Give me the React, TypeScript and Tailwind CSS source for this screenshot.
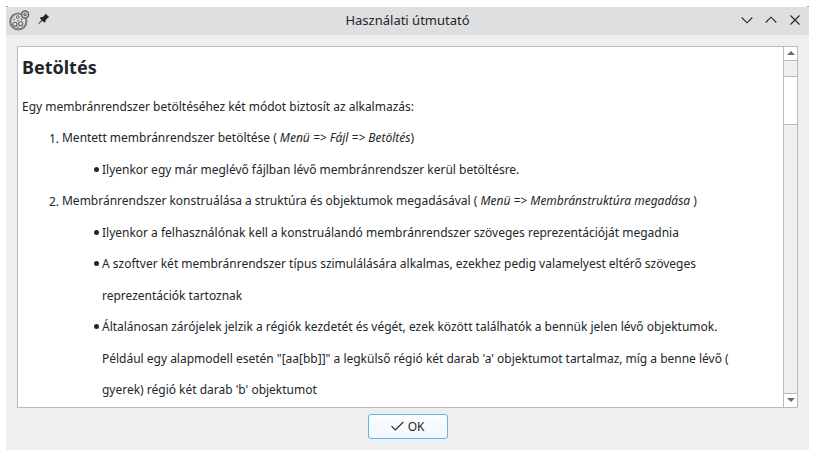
import React from "react";

function MembraneIcon() {
  return (
    <svg width="21" height="21" viewBox="0 0 22 22" fill="none" stroke="#606264">
      <circle cx="9.8" cy="12" r="8.5" strokeWidth="2" fill="#dcddde" />
      <circle cx="9.8" cy="12" r="8.5" strokeWidth="0.6" stroke="#a5a7a9" />
      <circle cx="16.8" cy="4.8" r="3.7" strokeWidth="1.5" fill="#d2d3d4" />
      <circle cx="16.8" cy="4.8" r="1.2" strokeWidth="1.1" />
      <circle cx="6.2" cy="14.9" r="2.1" strokeWidth="1.2" fill="#e5e6e7" />
      <circle cx="12.2" cy="14.4" r="2.1" strokeWidth="1.2" fill="#e5e6e7" />
      <circle cx="9.2" cy="7.4" r="1.5" strokeWidth="1" fill="#e5e6e7" />
      <circle cx="13.2" cy="9.8" r="0.7" strokeWidth="0.9" />
      <circle cx="5.3" cy="9.8" r="0.6" strokeWidth="0.8" />
      <circle cx="9.3" cy="11.3" r="0.5" strokeWidth="0.7" />
      <circle cx="9.4" cy="18" r="0.5" strokeWidth="0.8" />
    </svg>
  );
}

function PinIcon() {
  return (
    <svg className="mb-0.5" width="12" height="12" viewBox="0 0 12 12" fill="#232629">
      <path d="M7.4 0.5 11.3 4.3 9.9 4.8 7.6 7.2 7.3 9.3 6.2 9.6 4.4 7.8 0.8 11 0.3 10.6 3.6 6.9 2 5.2 2.4 4.2 4.7 3.9 7.1 1.7Z" />
    </svg>
  );
}

function TitleBar() {
  return (
    <header className="grid h-7 grid-cols-[1fr_auto_1fr] items-center rounded-t-[3px] bg-[#dedfe1]">
      <div className="flex items-center gap-2 pb-0.5 pl-[3px]">
        <MembraneIcon />
        <PinIcon />
      </div>
      <h1 className="pb-[3px] text-[13px] leading-4">Használati útmutató</h1>
      <svg className="mr-2 mb-0.5 justify-self-end" width="60" height="14" viewBox="0 0 60 14" fill="none" stroke="#232629" strokeWidth="1.1">
        <path d="M0.7 4.5 6 9.8 11.3 4.5" />
        <path d="M24.7 9.5 30 4.2 35.3 9.5" />
        <path d="M49.5 2.5 58.5 11.5M58.5 2.5 49.5 11.5" />
      </svg>
    </header>
  );
}

function ScrollBar() {
  return (
    <div className="flex w-[14px] shrink-0 flex-col border-l border-[#b8babc] bg-white">
      <div className="flex h-[13px] items-center justify-center pb-px">
        <svg width="8" height="4" viewBox="0 0 8 4" fill="#6b6d6f"><path d="M0 4 4 0 8 4Z" /></svg>
      </div>
      <div className="h-[17px] border-y border-[#b8babc] bg-[#f0f0f0]" />
      <div className="h-[47px] bg-white" />
      <div className="flex-1 border-y border-[#b8babc] bg-[#f0f0f0]" />
      <div className="flex h-[13px] items-center justify-center pb-px">
        <svg width="8" height="4" viewBox="0 0 8 4" fill="#6b6d6f"><path d="M0 0 4 4 8 0Z" /></svg>
      </div>
    </div>
  );
}

function Bullet({ children }: { children: React.ReactNode }) {
  return (
    <li className="flex">
      <span className="mt-[13px] mr-[3px] size-[5px] shrink-0 rounded-full bg-[#232629]" />
      <div className="whitespace-nowrap">{children}</div>
    </li>
  );
}

function Numbered({ label, children }: { label: string; children: React.ReactNode }) {
  return (
    <div className="flex h-[31.5px] whitespace-pre">
      <span className="w-[13px] pt-px">{label}</span>
      <div>{children}</div>
    </div>
  );
}

export default function App() {
  return (
    <div className="h-[456px] w-[816px] overflow-hidden bg-white pt-[6px] pl-[6px] font-['Noto_Sans',sans-serif] text-[#232629]">
      <div className="flex h-px w-[803px] justify-between">
        <span className="w-[2px] bg-[#9b9c9d]" />
        <span className="w-[2px] bg-[#9b9c9d]" />
      </div>
      <div className="flex h-[443px] w-[803px] flex-col bg-[#eeeff1]">
        <TitleBar />
        <main className="mt-[11px] ml-[11px] flex h-[362px] w-[781px] border border-[#b8babc] bg-white">
          <article className="min-w-0 flex-1 overflow-hidden pl-1 text-[12px] leading-[31.5px] tracking-[-0.01px]">
            <h2 className="mt-1 mb-2 text-[18px] leading-[32px] font-bold">Betöltés</h2>
            <p>Egy membránrendszer betöltéséhez két módot biztosít az alkalmazás:</p>
            <ol className="-mt-[0.25px] pl-[27px]">
              <li>
                <Numbered label="1.">Mentett membránrendszer betöltése ( <i>Menü =&gt; Fájl =&gt; Betöltés</i>)</Numbered>
                <ul className="pl-[45px]">
                  <Bullet>Ilyenkor egy már meglévő fájlban lévő membránrendszer kerül betöltésre.</Bullet>
                </ul>
              </li>
              <li>
                <Numbered label="2.">Membránrendszer konstruálása a struktúra és objektumok megadásával ( <i>Menü =&gt; Membránstruktúra megadása</i> )</Numbered>
                <ul className="pl-[45px]">
                  <Bullet>Ilyenkor a felhasználónak kell a konstruálandó membránrendszer szöveges reprezentációját megadnia</Bullet>
                  <Bullet>
                    A szoftver két membránrendszer típus szimulálására alkalmas, ezekhez pedig valamelyest eltérő szöveges<br />
                    reprezentációk tartoznak
                  </Bullet>
                  <Bullet>
                    Általánosan zárójelek jelzik a régiók kezdetét és végét, ezek között találhatók a bennük jelen lévő objektumok.<br />
                    Például egy alapmodell esetén "[aa[bb]]" a legkülső régió két darab 'a' objektumot tartalmaz, míg a benne lévő (<br />
                    gyerek) régió két darab 'b' objektumot
                  </Bullet>
                </ul>
              </li>
            </ol>
          </article>
          <ScrollBar />
        </main>
        <button className="mt-[6px] flex h-[25px] w-20 items-center justify-center gap-1 self-center rounded-[3px] border border-[#5eb5e6] bg-linear-to-b from-[#fcfdfe] to-[#f1f8fc] text-[12px] tracking-[-0.2px]">
          <svg className="mb-px" width="13" height="10" viewBox="0 0 13 10" fill="none" stroke="#232629" strokeWidth="1.1"><path d="M0.5 5.2 4.3 9 12.3 1" /></svg>
          OK
        </button>
      </div>
    </div>
  );
}
